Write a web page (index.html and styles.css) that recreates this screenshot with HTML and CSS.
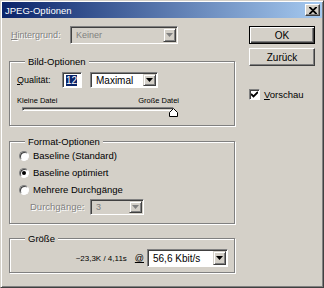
FILE: index.html
```html
<!DOCTYPE html>
<html lang="de">
<head>
    <meta charset="UTF-8">
    <title>JPEG-Optionen</title>
    <link rel="stylesheet" href="styles.css">
</head>
<body>
    <div class="window">
        <div class="titlebar">
            <span class="title">JPEG-Optionen</span>
            <span class="close">
                <svg width="8" height="7" viewBox="0 0 8 7"><path d="M0 0 L7 7 M1 0 L8 7 M7 0 L0 7 M8 0 L1 7" stroke="#000" stroke-width="1.2"/></svg>
            </span>
        </div>

        <div class="content">
            <div class="main">
                <!-- Hintergrund (disabled) -->
                <div class="row bg-row">
                    <span class="label disabled"><u>H</u>intergrund:</span>
                    <div class="combo off bg-combo">
                        <span class="value">Keiner</span>
                        <span class="drop"><svg width="7" height="4" viewBox="0 0 7 4"><path d="M0 0 H7 L3.5 4 Z" fill="#808080"/></svg></span>
                    </div>
                </div>

                <fieldset class="group image-group">
                    <legend>Bild-Optionen</legend>
                    <div class="row quality-row">
                        <span class="label q-label"><u>Q</u>ualität:</span>
                        <span class="field q-field"><span class="selected">12</span></span>
                        <div class="combo q-combo">
                            <span class="value">Maximal</span>
                            <span class="drop"><svg width="7" height="4" viewBox="0 0 7 4"><path d="M0 0 H7 L3.5 4 Z" fill="#000"/></svg></span>
                        </div>
                    </div>
                    <div class="slider-box">
                        <div class="slider-labels">
                            <span>Kleine Datei</span>
                            <span>Große Datei</span>
                        </div>
                        <div class="slider">
                            <div class="track"></div>
                            <svg class="thumb" width="9" height="9" viewBox="0 0 9 9">
                                <path d="M0.5 8.5 V4.5 L4.5 0.5 L8.5 4.5 V8.5 Z" fill="#fff" stroke="#000"/>
                            </svg>
                        </div>
                    </div>
                </fieldset>

                <fieldset class="group format-group">
                    <legend>Format-Optionen</legend>
                    <div class="radio-row"><span class="radio"></span>Baseline (Standard)</div>
                    <div class="radio-row"><span class="radio checked"></span>Baseline optimiert</div>
                    <div class="radio-row"><span class="radio"></span>Mehrere Durchgänge</div>
                    <div class="row scans-row">
                        <span class="label disabled scans-label">Durchgänge:</span>
                        <div class="combo off scans-combo">
                            <span class="value">3</span>
                            <span class="drop"><svg width="7" height="4" viewBox="0 0 7 4"><path d="M0 0 H7 L3.5 4 Z" fill="#808080"/></svg></span>
                        </div>
                    </div>
                </fieldset>

                <fieldset class="group size-group">
                    <legend>Größe</legend>
                    <div class="row size-row">
                        <span class="estimate">~23,3K / 4,11s</span>
                        <span class="at"><u>@</u></span>
                        <div class="combo speed-combo">
                            <span class="value">56,6 Kbit/s</span>
                            <span class="drop"><svg width="7" height="4" viewBox="0 0 7 4"><path d="M0 0 H7 L3.5 4 Z" fill="#000"/></svg></span>
                        </div>
                    </div>
                </fieldset>
            </div>

            <div class="side">
                <button class="btn default">OK</button>
                <button class="btn">Zurück</button>
                <div class="check-row">
                    <span class="checkbox">
                        <svg width="7" height="7" viewBox="0 0 7 7"><path d="M0 3 L2.5 5.5 L7 1" fill="none" stroke="#000" stroke-width="1.8"/></svg>
                    </span>
                    <span><u>V</u>orschau</span>
                </div>
            </div>
        </div>
    </div>
</body>
</html>
```

FILE: styles.css
```css
body {
    margin: 0;
    padding: 0;
    background-color: #d4d0c8;
}

.window {
    width: 324px;
    height: 288px;
    box-sizing: border-box;
    padding: 1px;
    background-color: #d4d0c8;
    border: 1px solid;
    border-color: #d4d0c8 #404040 #404040 #d4d0c8;
    box-shadow: inset 1px 1px #fff, inset -1px -1px #808080;
    font-family: "Liberation Sans", Arial, sans-serif;
    font-size: 9px;
    color: #000;
}

u {
    text-decoration: underline;
}

/* title bar */
.titlebar {
    height: 16px;
    display: flex;
    align-items: center;
    justify-content: space-between;
    padding: 0 2px 0 3px;
    background: linear-gradient(to right, #0a246a, #a6caf0);
}

.title {
    color: #fff;
    font-size: 9.5px;
}

.close {
    width: 15px;
    height: 12px;
    box-sizing: border-box;
    display: flex;
    align-items: center;
    justify-content: center;
    background-color: #d4d0c8;
    border: 1px solid;
    border-color: #fff #404040 #404040 #fff;
    box-shadow: inset -1px -1px #808080;
}

/* layout */
.content {
    display: flex;
    padding: 8px 0 0 7px;
}

.main {
    width: 226px;
}

.side {
    width: 66px;
    margin-left: 14px;
    display: flex;
    flex-direction: column;
}

.row {
    display: flex;
    align-items: center;
}

.label {
    white-space: nowrap;
}

.disabled {
    color: #808080;
    text-shadow: 1px 1px 0 #fff;
}

/* combo boxes */
.combo {
    height: 17px;
    box-sizing: border-box;
    display: flex;
    padding: 1px;
    background-color: #fff;
    border: 1px solid;
    border-color: #808080 #fff #fff #808080;
    box-shadow: inset 1px 1px #404040;
    font-size: 10px;
}

.combo .value {
    flex: 1;
    display: flex;
    align-items: center;
    padding-left: 4px;
    white-space: nowrap;
}

.combo .drop {
    width: 13px;
    box-sizing: border-box;
    display: flex;
    align-items: center;
    justify-content: center;
    background-color: #d4d0c8;
    border: 1px solid;
    border-color: #d4d0c8 #404040 #404040 #d4d0c8;
    box-shadow: inset 1px 1px #fff, inset -1px -1px #808080;
}

.combo.off {
    background-color: #d4d0c8;
    color: #808080;
    font-size: 9px;
}

.bg-row {
    height: 18px;
}

.bg-row .label {
    width: 61px;
    flex: none;
    padding-left: 2px;
    box-sizing: border-box;
}

.bg-combo {
    width: 108px;
    flex: none;
    height: 18px;
}

/* group boxes */
.group {
    box-sizing: border-box;
    width: 226px;
    margin: 0;
    padding: 5px 6px 6px 7px;
    border: 1px solid #808080;
    box-shadow: inset 1px 1px #fff, 1px 1px #fff;
    min-inline-size: 0;
}

.group legend {
    margin-left: 8px;
    padding: 0 3px;
    background-color: #d4d0c8;
    font-size: 9.5px;
    line-height: 11px;
}

.image-group {
    margin-top: 12px;
    height: 70px;
}

.quality-row {
    height: 16px;
}

.q-label {
    width: 45px;
}

.field {
    width: 20px;
    height: 16px;
    box-sizing: border-box;
    display: flex;
    align-items: center;
    padding-left: 3px;
    background-color: #fff;
    border: 1px solid;
    border-color: #808080 #fff #fff #808080;
    box-shadow: inset 1px 1px #404040;
    font-size: 10px;
}

.selected {
    background-color: #0a246a;
    color: #fff;
    line-height: 11px;
}

.q-combo {
    width: 68px;
    height: 16px;
    margin-left: 8px;
}

.slider-box {
    width: 162px;
    margin-top: 9px;
}

.slider-labels {
    display: flex;
    justify-content: space-between;
    font-size: 7.5px;
    line-height: 8px;
}

.slider {
    position: relative;
    height: 10px;
    margin-top: 2px;
}

.track {
    margin: 2px 0 0 5px;
    width: 152px;
    height: 4px;
    box-sizing: border-box;
    border: 1px solid;
    border-color: #808080 #fff #fff #808080;
    box-shadow: inset 1px 1px #404040;
}

.thumb {
    position: absolute;
    left: 152px;
    top: 1px;
}

.format-group {
    margin-top: 10px;
    height: 88px;
    padding-top: 0;
}

.radio-row {
    display: flex;
    align-items: center;
    height: 17px;
    margin-left: 2px;
    font-size: 9.5px;
}

.radio {
    width: 10px;
    height: 10px;
    box-sizing: border-box;
    margin-right: 4px;
    border-radius: 50%;
    background-color: #fff;
    border: 1px solid;
    border-color: #808080 #fff #fff #808080;
    box-shadow: inset 1px 1px #404040;
    display: flex;
    align-items: center;
    justify-content: center;
}

.radio.checked::after {
    content: "";
    width: 4px;
    height: 4px;
    border-radius: 50%;
    background-color: #000;
}

.scans-row {
    height: 17px;
}

.scans-label {
    width: 73px;
    flex: none;
    padding-left: 13px;
    box-sizing: border-box;
    font-size: 9.5px;
}

.scans-combo {
    width: 54px;
    height: 16px;
}

.size-group {
    margin-top: 9px;
    height: 40px;
    padding-top: 5px;
}

.size-row {
    justify-content: flex-end;
    height: 18px;
}

.estimate {
    font-size: 8px;
    margin-right: 8px;
}

.at {
    font-size: 9px;
    margin-right: 3px;
}

.speed-combo {
    width: 81px;
    height: 18px;
}

/* buttons */
.btn {
    width: 66px;
    height: 18px;
    margin: 0;
    padding: 0;
    font-family: inherit;
    font-size: 10px;
    color: #000;
    background-color: #d4d0c8;
    border: 1px solid;
    border-color: #fff #404040 #404040 #fff;
    box-shadow: inset -1px -1px #808080;
}

.btn.default {
    border: 1px solid #000;
    box-shadow: inset 1px 1px #fff, inset -1px -1px #404040, inset -2px -2px #808080;
}

.btn + .btn {
    margin-top: 4px;
}

.check-row {
    display: flex;
    align-items: center;
    margin-top: 23px;
    font-size: 9.5px;
}

.checkbox {
    width: 11px;
    height: 11px;
    box-sizing: border-box;
    margin-right: 4px;
    display: flex;
    align-items: center;
    justify-content: center;
    background-color: #fff;
    border: 1px solid;
    border-color: #808080 #fff #fff #808080;
    box-shadow: inset 1px 1px #404040;
}
```
